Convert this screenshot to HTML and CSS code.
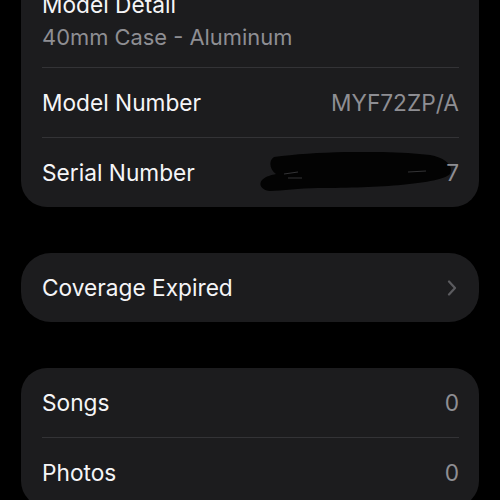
FILE: index.html
```html
<!DOCTYPE html>
<html>
<head>
<meta charset="utf-8">
<link rel="stylesheet" href="styles.css">
</head>
<body>
<div class="page">
  <div class="card card-top">
    <div class="row detail">
      <div class="title">Model Detail</div>
      <div class="sub">40mm Case - Aluminum</div>
    </div>
    <div class="sep"></div>
    <div class="row">
      <span class="label">Model Number</span>
      <span class="value">MYF72ZP/A</span>
    </div>
    <div class="sep"></div>
    <div class="row serial">
      <span class="label">Serial Number</span>
      <span class="value">7</span>
      <svg class="scribble" width="200" height="40" viewBox="0 0 200 40">
        <path d="M16 5 C60 -1 130 -2 172 3 C188 6 196 14 192 22 C182 32 120 36 60 36 C40 36 25 39 12 39 C4 38 0 33 4 28 C8 24 14 23 18 22 C12 18 10 9 16 5 Z" fill="#030303"/>
        <path d="M26 22 L40 20 M30 26 L44 26 M150 20 L168 19" stroke="#6a6a6e" stroke-width="0.8" fill="none" opacity="0.6"/>
      </svg>
    </div>
  </div>

  <div class="card card-pill">
    <div class="row">
      <span class="label">Coverage Expired</span>
      <svg class="chev" width="10" height="16" viewBox="0 0 10 16">
        <path d="M2 1.5 L8 8 L2 14.5" fill="none" stroke="#5b5b5f" stroke-width="2.2" stroke-linecap="round" stroke-linejoin="round"/>
      </svg>
    </div>
  </div>

  <div class="card">
    <div class="row">
      <span class="label">Songs</span>
      <span class="value">0</span>
    </div>
    <div class="sep"></div>
    <div class="row">
      <span class="label">Photos</span>
      <span class="value">0</span>
    </div>
  </div>
</div>
</body>
</html>
```
FILE: styles.css
```css
html, body {
  margin: 0;
  padding: 0;
  background: #000;
  overflow: hidden;
}
body {
  width: 500px;
  height: 500px;
  font-family: Inter, "Noto Sans", "Liberation Sans", sans-serif;
  font-size: 22.7px;
  color: #f5f5f7;
}
.page {
  padding: 0 21px;
  display: flex;
  flex-direction: column;
  gap: 46px;
}
.card {
  background: #1c1c1e;
  border-radius: 26px;
  padding: 0 20px 0 21px;
  display: flex;
  flex-direction: column;
}
.card-top {
  margin-top: -25px;
}
.card-pill {
  border-radius: 30px;
}
.row {
  height: 69px;
  display: flex;
  align-items: center;
  justify-content: space-between;
  line-height: 32px;
  position: relative;
}
.row.detail {
  height: auto;
  display: block;
  padding: 14px 0;
}
.title {
  color: #f5f5f7;
}
.sub {
  color: #8e8e93;
  font-size: 21.9px;
}
.value {
  color: #8e8e93;
}
.sep {
  height: 1px;
  background: #333336;
}
.scribble {
  position: absolute;
  left: 216px;
  top: 14px;
}
.serial .value {
  position: relative;
  z-index: 1;
}
.chev {
  margin-right: 2px;
}
```
